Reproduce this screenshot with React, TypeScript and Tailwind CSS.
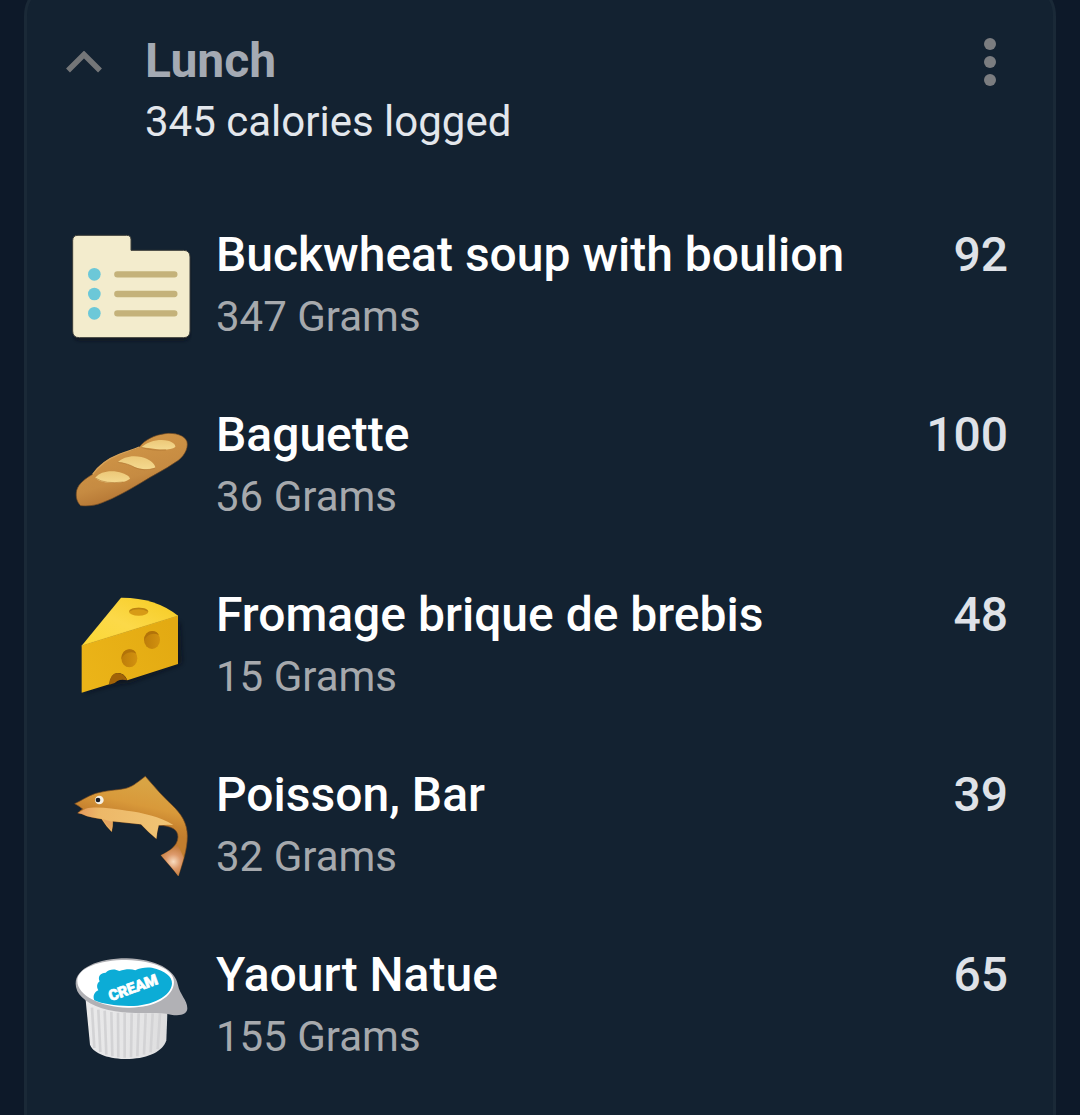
import { useState } from 'react'
import type { ReactNode } from 'react'

type FoodItem = {
  id: number
  name: string
  amount: string
  calories: number
  icon: ReactNode
}

function RecipeIcon() {
  return (
    <svg viewBox="36 15 360 360" className="h-[120px] w-[120px] shrink-0" aria-hidden="true">
      <defs>
        <filter id="recipe-shadow" x="-10%" y="-10%" width="120%" height="120%">
          <feGaussianBlur stdDeviation="5" />
        </filter>
      </defs>
      <rect x="40" y="100" width="350" height="262" rx="18" fill="#0a1119" opacity="0.6" filter="url(#recipe-shadow)" />
      <path
        d="M54 46H200Q213 46 213 59V91H370Q390 91 390 111V333Q390 353 370 353H58Q38 353 38 333V62Q38 46 54 46Z"
        fill="#f3eccd"
        stroke="#3c3e3a"
        strokeWidth="3"
      />
      <g fill="#6cc8d8">
        <circle cx="103" cy="163" r="19" />
        <circle cx="103" cy="222" r="19" />
        <circle cx="103" cy="280" r="19" />
      </g>
      <path d="M172 163H343M172 222H343M172 280H343" stroke="#c4b27a" strokeWidth="19" strokeLinecap="round" />
    </svg>
  )
}

function BaguetteIcon() {
  return (
    <svg viewBox="36 -30 360 360" className="h-[120px] w-[120px] shrink-0" aria-hidden="true">
      <defs>
        <linearGradient id="crust" x1="0.35" y1="0.2" x2="0.65" y2="0.85">
          <stop offset="0" stopColor="#cf9446" />
          <stop offset="0.6" stopColor="#c68b42" />
          <stop offset="1" stopColor="#b27332" />
        </linearGradient>
        <linearGradient id="slash" x1="0" y1="0" x2="0" y2="1">
          <stop offset="0" stopColor="#ecc878" />
          <stop offset="1" stopColor="#f4d98f" />
        </linearGradient>
      </defs>
      <path
        d="M62 272C51 262 46 246 50 226C56 205 77 190 98 178C113 151 147 130 178 118C205 108 222 103 238 96C254 74 284 60 315 56C345 52 374 61 381 80C386 102 370 128 346 142C315 164 277 182 242 204C205 226 165 249 127 263C107 272 82 274 62 272Z"
        fill="url(#crust)"
        stroke="#6b4722"
        strokeWidth="2"
      />
      <path d="M98 178C117 151 147 130 178 118C205 108 222 103 238 96" fill="none" stroke="#d7a45b" strokeWidth="4" />
      <path d="M244 97C263 79 296 71 324 77C339 81 347 88 346 96C332 106 300 105 272 100Z" fill="url(#slash)" />
      <path d="M173 142C189 126 216 120 244 126C267 132 284 144 286 157C274 166 246 165 225 157C205 148 190 142 173 142Z" fill="url(#slash)" />
      <path d="M106 188C119 172 143 166 171 170C193 174 208 182 210 191C196 202 170 205 145 203C125 201 112 196 106 188Z" fill="url(#slash)" />
      <path d="M173 142Q205 145 225 158Q250 169 284 160M244 97Q276 108 318 105M108 190Q135 208 190 201" fill="none" stroke="#af7432" strokeWidth="3" opacity="0.6" />
    </svg>
  )
}

function CheeseIcon() {
  return (
    <svg viewBox="36 0 360 360" className="h-[120px] w-[120px] shrink-0" aria-hidden="true">
      <defs>
        <linearGradient id="cheese-top" x1="0" y1="1" x2="1" y2="0">
          <stop offset="0" stopColor="#fbd835" />
          <stop offset="0.45" stopColor="#fcd949" />
          <stop offset="1" stopColor="#f5ca20" />
        </linearGradient>
        <linearGradient id="cheese-side" x1="0" y1="0.7" x2="1" y2="0.3">
          <stop offset="0" stopColor="#ebb418" />
          <stop offset="1" stopColor="#e3aa12" />
        </linearGradient>
        <linearGradient id="cheese-hole" x1="0" y1="0" x2="1" y2="0">
          <stop offset="0" stopColor="#bd7d0a" />
          <stop offset="1" stopColor="#d2910f" />
        </linearGradient>
        <filter id="cheese-shadow" x="-20%" y="-20%" width="140%" height="140%">
          <feGaussianBlur stdDeviation="6" />
        </filter>
      </defs>
      <path d="M70 326L150 302L210 294L362 238L366 232L360 110Z" fill="#0a1119" opacity="0.6" filter="url(#cheese-shadow)" />
      <path d="M65 182L183 38Q285 37 354 92Z" fill="url(#cheese-top)" />
      <path d="M65 182L354 92V237L202 286Q193 264 173 264Q151 267 148 298L65 323Z" fill="url(#cheese-side)" />
      <path d="M65 182L354 92" stroke="#f3c22b" strokeWidth="2" />
      <path d="M148 299Q149 265 173 264Q192 264 202 286Q184 281 172 288Q166 292 164 294Z" fill="#a16207" />
      <ellipse cx="236" cy="80" rx="29" ry="12" fill="#d79b16" />
      <path d="M207 80Q210 68 236 68Q262 68 265 80Q250 73 236 73Q219 73 207 80Z" fill="#b98212" />
      <ellipse cx="276" cy="165" rx="24" ry="27" fill="url(#cheese-hole)" />
      <ellipse cx="208" cy="220" rx="24" ry="27" fill="url(#cheese-hole)" />
      <path d="M252 167Q254 139 276 138Q292 138 297 151Q285 144 272 148Q258 153 252 167ZM184 222Q186 194 208 193Q224 193 229 206Q217 199 204 203Q190 208 184 222Z" fill="#b27309" />
    </svg>
  )
}

function FishIcon() {
  return (
    <svg viewBox="36 0 360 360" className="h-[120px] w-[120px] shrink-0" aria-hidden="true">
      <defs>
        <linearGradient id="fish-back" gradientUnits="userSpaceOnUse" x1="190" y1="40" x2="160" y2="170">
          <stop offset="0" stopColor="#d9a444" />
          <stop offset="0.5" stopColor="#d8993a" />
          <stop offset="0.8" stopColor="#c98530" />
          <stop offset="1" stopColor="#c27e2e" />
        </linearGradient>
        <linearGradient id="fish-belly" gradientUnits="userSpaceOnUse" x1="60" y1="140" x2="340" y2="180">
          <stop offset="0" stopColor="#e59c5e" />
          <stop offset="0.2" stopColor="#edb868" />
          <stop offset="1" stopColor="#f0c576" />
        </linearGradient>
        <radialGradient id="fish-tail" gradientUnits="userSpaceOnUse" cx="340" cy="290" r="50">
          <stop offset="0" stopColor="#f8dcc0" />
          <stop offset="0.45" stopColor="#dd9a6b" />
          <stop offset="1" stopColor="#bf7735" />
        </radialGradient>
      </defs>
      <path
        d="M44 116C68 105 91 88 116 83C149 75 180 75 201 69C220 64 238 47 256 34C273 53 302 89 335 119C364 146 382 175 382 213C382 252 369 292 355 333C340 313 319 291 303 271C326 259 353 244 354 216C354 194 335 182 296 181Q291 200 289 221Q265 202 243 178Q202 174 158 169Q159 184 155 200Q139 185 125 162Q96 158 80 153Q65 145 53 144Q60 137 68 132Q59 124 44 116Z"
        fill="url(#fish-back)"
        stroke="#7a4c20"
        strokeWidth="2"
      />
      <path
        d="M54 144Q67 136 77 131C110 123 154 131 201 137C247 143 300 154 340 180Q320 178 296 181Q291 200 289 221Q265 202 243 178Q202 174 158 169Q159 184 155 200Q139 185 125 162Q96 158 80 153Q65 145 54 144Z"
        fill="url(#fish-belly)"
      />
      <path d="M128 163L157 170L154 196Q142 184 128 163Z" fill="#df9559" opacity="0.6" />
      <path d="M303 271C326 259 344 249 351 236Q365 262 371 278L355 333C340 313 319 291 303 271Z" fill="url(#fish-tail)" />
      <circle cx="118" cy="105" r="13" fill="#f6f1e4" />
      <circle cx="114" cy="105" r="7" fill="#171b24" />
    </svg>
  )
}

function CreamIcon() {
  return (
    <svg viewBox="36 0 360 360" className="h-[120px] w-[120px] shrink-0" aria-hidden="true">
      <defs>
        <linearGradient id="cup" x1="0" y1="0" x2="1" y2="0">
          <stop offset="0" stopColor="#e9e9ea" />
          <stop offset="0.7" stopColor="#e4e4e5" />
          <stop offset="1" stopColor="#dcdcdd" />
        </linearGradient>
      </defs>
      <path d="M77 165L90 299C102 329 153 343 208 342C266 340 309 319 319 286L323 180Z" fill="url(#cup)" />
      <path
        d="M96 188L103 309M115 194L121 321M134 197L139 329M154 201L157 334M174 203L175 337M194 204L194 338M215 205L213 337M236 205L232 334M257 205L252 329M278 205L272 322M300 205L293 312"
        stroke="#d3d3d5"
        strokeWidth="8"
      />
      <path d="M47 116C47 70 113 40 200 40C286 42 347 74 354 121C359 148 382 166 382 190C382 208 361 214 333 209C295 200 254 206 211 203C149 202 93 184 66 157Q47 139 47 116Z" fill="#b1b1b5" />
      <path d="M52 108C52 69 117 45 200 45C283 47 343 74 342 112C341 157 281 190 203 188C123 187 52 151 52 108Z" fill="#ffffff" />
      <path
        d="M103 166C98 153 102 142 115 136C108 124 112 114 119 109C112 95 122 83 137 83C147 72 164 70 178 78C195 73 212 71 226 76C240 67 263 66 276 68C315 77 337 94 336 116C333 154 275 184 206 183C164 182 127 177 103 166Z"
        fill="#0cacd6"
      />
      <text
        transform="translate(152 169) rotate(-20)"
        fontFamily="Roboto, sans-serif"
        fontSize="45"
        fontWeight="900"
        fill="#ffffff"
        stroke="#ffffff"
        strokeWidth="2"
      >
        CREAM
      </text>
    </svg>
  )
}

const LOGGED_CALORIES = 345

const ITEMS: FoodItem[] = [
  { id: 1, name: 'Buckwheat soup with boulion', amount: '347 Grams', calories: 92, icon: <RecipeIcon /> },
  { id: 2, name: 'Baguette', amount: '36 Grams', calories: 100, icon: <BaguetteIcon /> },
  { id: 3, name: 'Fromage brique de brebis', amount: '15 Grams', calories: 48, icon: <CheeseIcon /> },
  { id: 4, name: 'Poisson, Bar', amount: '32 Grams', calories: 39, icon: <FishIcon /> },
  { id: 5, name: 'Yaourt Natue', amount: '155 Grams', calories: 65, icon: <CreamIcon /> },
]

function FoodRow({ item }: { item: FoodItem }) {
  return (
    <li className="flex items-center gap-6">
      {item.icon}
      <div className="min-w-0 flex-1">
        <div className="flex justify-between gap-6 text-[48px] leading-[64px] font-medium">
          <h3 className="text-white">{item.name}</h3>
          <span className="text-[#dfe2e8]">{item.calories}</span>
        </div>
        <p className="text-[42px] leading-[60px] text-[#a6a9ad]">{item.amount}</p>
      </div>
    </li>
  )
}

export default function App() {
  const [open, setOpen] = useState(true)

  return (
    <main className="min-h-screen overflow-hidden bg-[#0d1929] px-6 font-['Roboto',sans-serif]">
      {/* Meal card */}
      <section className="-mt-5 min-h-[calc(100vh+60px)] rounded-[36px] border-[3px] border-[#1a2937] bg-[#132231] pt-12">
        <header className="flex items-start px-9">
          <button
            type="button"
            aria-label={open ? 'Collapse Lunch' : 'Expand Lunch'}
            aria-expanded={open}
            onClick={() => setOpen((v) => !v)}
            className="mr-10 flex h-[62px] w-[42px] items-center justify-center"
          >
            <svg viewBox="0 0 36 22" className={open ? 'h-[22px] w-9' : 'h-[22px] w-9 rotate-180'} aria-hidden="true">
              <path d="M2 19.5L18 3.5L34 19.5" fill="none" stroke="#747678" strokeWidth="5.5" />
            </svg>
          </button>
          <div className="min-w-0 flex-1">
            <h2 className="text-[48px] leading-[60px] font-bold text-[#a4aab3]">Lunch</h2>
            <p className="text-[42px] leading-[62px] text-[#e3e7ec]">{LOGGED_CALORIES} calories logged</p>
          </div>
          <button type="button" aria-label="Meal options" className="flex h-[62px] w-[54px] items-center justify-center">
            <svg viewBox="0 0 12 48" className="h-12 w-3" fill="#7b7d80" aria-hidden="true">
              <circle cx="6" cy="6" r="6" />
              <circle cx="6" cy="24" r="6" />
              <circle cx="6" cy="42" r="6" />
            </svg>
          </button>
        </header>

        {/* Logged foods */}
        {open && (
          <ul className="mt-[70px] flex flex-col gap-14 px-[45px]">
            {ITEMS.map((item) => <FoodRow key={item.id} item={item} />)}
          </ul>
        )}
      </section>
    </main>
  )
}
